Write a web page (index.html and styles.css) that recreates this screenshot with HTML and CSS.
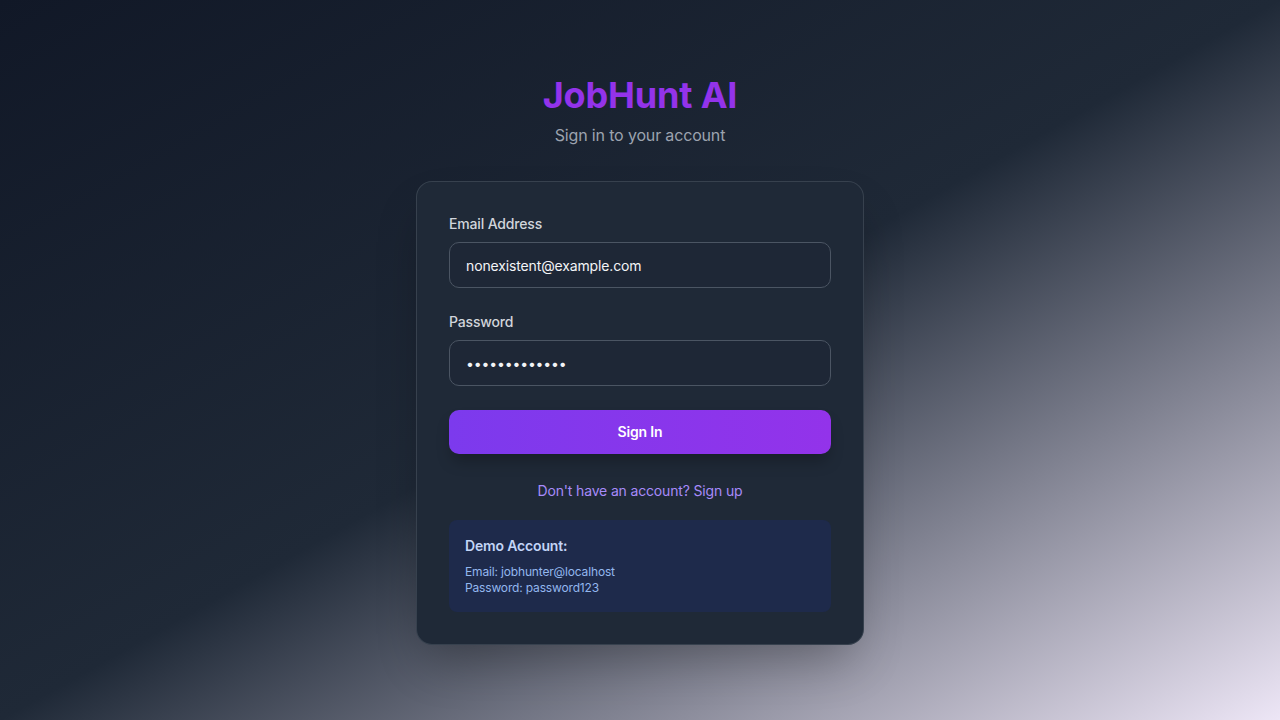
FILE: index.html
```html
<!DOCTYPE html>
<html lang="en">
<head>
<meta charset="utf-8">
<title>JobHunt AI - Sign in</title>
<link rel="stylesheet" href="styles.css">
</head>
<body>
<main class="page">
  <div class="wrap">
    <header class="brand">
      <h1 class="title">JobHunt AI</h1>
      <p class="subtitle">Sign in to your account</p>
    </header>
    <section class="card">
      <form class="form">
        <div class="field">
          <label class="label" for="email">Email Address</label>
          <input class="input" id="email" type="email" value="nonexistent@example.com">
        </div>
        <div class="field">
          <label class="label" for="password">Password</label>
          <input class="input" id="password" type="password" value="password12345">
        </div>
        <button class="btn" type="button">Sign In</button>
      </form>
      <p class="signup"><a class="signup-link" href="#">Don't have an account? Sign up</a></p>
      <div class="demo">
        <p class="demo-title">Demo Account:</p>
        <p class="demo-line">Email: jobhunter@localhost</p>
        <p class="demo-line">Password: password123</p>
      </div>
    </section>
  </div>
</main>
</body>
</html>
```
FILE: styles.css
```css
* { box-sizing: border-box; }
html, body { margin: 0; padding: 0; }
body {
  font-family: Inter, "Noto Sans", "Liberation Sans", sans-serif;
  letter-spacing: -0.01em;
  background: linear-gradient(to bottom right, #111827 0%, #1f2937 50%, #ede6f6 100%);
  min-height: 100vh;
}
.page {
  min-height: 100vh;
  display: flex;
  align-items: center;
  justify-content: center;
}
.wrap { width: 448px; }
.brand { text-align: center; margin-bottom: 34px; }
.title {
  margin: 0;
  font-size: 36px;
  line-height: 40px;
  font-weight: 700;
  color: #9333ea;
}
.subtitle {
  margin: 8px 0 0;
  font-size: 16px;
  line-height: 24px;
  color: #9ca3af;
}
.card {
  background: #1f2937;
  border: 1px solid rgba(75, 85, 99, 0.55);
  border-radius: 16px;
  padding: 32px;
  box-shadow: 0 25px 50px -12px rgba(0, 0, 0, 0.3);
}
.form { display: flex; flex-direction: column; gap: 24px; }
.field { display: flex; flex-direction: column; }
.label {
  font-size: 14px;
  line-height: 20px;
  font-weight: 500;
  color: #d1d5db;
  margin-bottom: 8px;
}
.input {
  height: 46px;
  width: 100%;
  padding: 0 16px;
  background: #1e2736;
  border: 1px solid #4b5563;
  border-radius: 10px;
  color: #f3f4f6;
  font-family: inherit;
  font-size: 14px;
  letter-spacing: -0.01em;
  outline: none;
}
.btn {
  height: 44px;
  width: 100%;
  border: none;
  border-radius: 10px;
  background: linear-gradient(to right, #7c3aed, #9333ea);
  color: #ffffff;
  font-family: inherit;
  font-size: 14px;
  font-weight: 600;
  letter-spacing: inherit;
  line-height: 20px;
  padding: 0 0 1px;
  box-shadow: 0 10px 15px -3px rgba(0, 0, 0, 0.25);
  cursor: pointer;
}
.signup {
  margin: 27px 0 0;
  text-align: center;
  font-size: 14px;
  line-height: 20px;
}
.signup-link { color: #a78bfa; text-decoration: none; }
.demo {
  margin-top: 19px;
  background: #1e2a4b;
  border-radius: 8px;
  padding: 16px;
}
.demo-title {
  margin: 0 0 8px;
  font-size: 14px;
  line-height: 20px;
  font-weight: 600;
  color: #c3d5f7;
}
.demo-line {
  margin: 0;
  font-size: 12px;
  line-height: 16px;
  color: #93b7ee;
}
```
